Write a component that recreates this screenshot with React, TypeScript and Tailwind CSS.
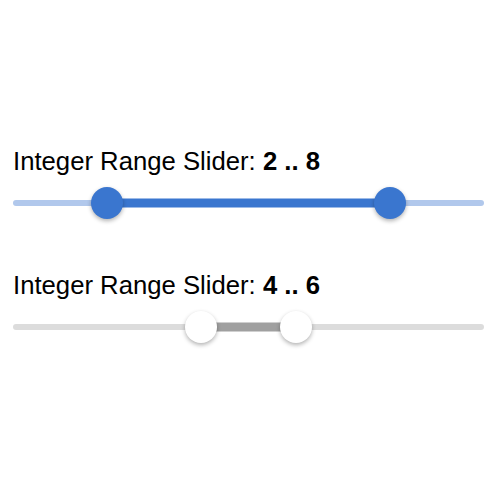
import React from 'react';

type RangeProps = {
  lo: number;
  hi: number;
  min?: number;
  max?: number;
  variant: 'blue' | 'gray';
};

function RangeSlider({ lo, hi, min = 0, max = 10, variant }: RangeProps) {
  const pct = (v: number) => ((v - min) / (max - min)) * 100;
  const blue = variant === 'blue';

  return (
    <div className="relative h-[32px] w-full">
      {/* track */}
      <div
        className={`absolute left-0 right-0 top-1/2 h-[6px] -translate-y-1/2 rounded-full ${
          blue ? 'bg-[#b1c8ec]' : 'bg-[#dcdcdc]'
        }`}
      />
      {/* selected range */}
      <div
        className={`absolute top-1/2 h-[9px] -translate-y-1/2 ${blue ? 'bg-[#3a76cf]' : 'bg-[#a0a0a0]'}`}
        style={{ left: `${pct(lo)}%`, width: `${pct(hi) - pct(lo)}%` }}
      />
      {[lo, hi].map((v, i) => (
        <div
          key={i}
          className={`absolute top-1/2 h-[32px] w-[32px] -translate-x-1/2 -translate-y-1/2 rounded-full shadow-[0_2px_4px_rgba(0,0,0,0.3)] ${
            blue ? 'bg-[#3a76cf]' : 'bg-white'
          }`}
          style={{ left: `${pct(v)}%` }}
        />
      ))}
    </div>
  );
}

function Field({ lo, hi, variant }: { lo: number; hi: number; variant: 'blue' | 'gray' }) {
  return (
    <div className="flex flex-col gap-[11px]">
      <div className="text-[25.7px] leading-[30px] text-black">
        Integer Range Slider:{' '}
        <span className="font-bold">
          {lo} .. {hi}
        </span>
      </div>
      <RangeSlider lo={lo} hi={hi} variant={variant} />
    </div>
  );
}

export default function App() {
  return (
    <div
      className="h-[500px] w-[500px] bg-white px-[13px] pt-[146px]"
      style={{ fontFamily: '"Liberation Sans", Arial, sans-serif' }}
    >
      <div className="flex flex-col gap-[51px] w-[471px]">
        <Field lo={2} hi={8} variant="blue" />
        <Field lo={4} hi={6} variant="gray" />
      </div>
    </div>
  );
}
